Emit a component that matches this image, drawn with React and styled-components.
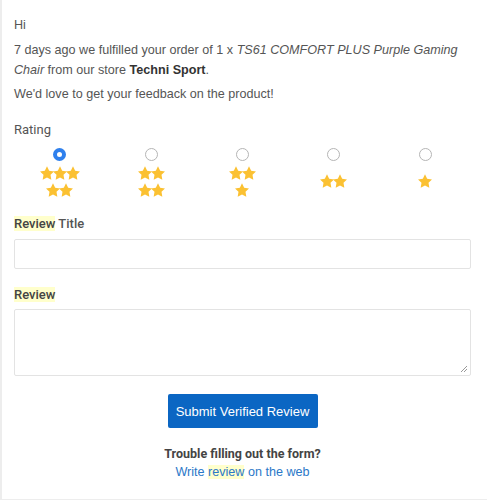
import React from 'react';
import styled, { createGlobalStyle } from 'styled-components';

const GlobalStyle = createGlobalStyle`
	body {
		margin: 0;
		background: #fff;
	}
`;

const Page = styled.div`
	box-sizing: border-box;
	width: 487px;
	height: 500px;
	padding: 15px 16px 0 12px;
	border-left: 2px solid #ededed;
	border-bottom: 1px solid #ededed;
	font-family: 'Liberation Sans', Arial, sans-serif;
	font-size: 12.6px;
	color: #555;
`;

const Text = styled.p`
	margin: 0 0 ${(p) => p.gap || 4}px;
	line-height: 20px;
`;

const Strong = styled.b`
	color: #333;
`;

const Label = styled.div`
	font-family: Roboto, 'Liberation Sans', sans-serif;
	font-size: 13px;
	font-weight: ${(p) => (p.bold ? 500 : 400)};
	line-height: 16px;
	color: #555;
	margin-top: ${(p) => p.top}px;
`;

const Mark = styled.mark`
	background: #ffffcc;
	color: ${(p) => p.color || '#444'};
`;

const RatingGrid = styled.div`
	display: grid;
	grid-template-columns: repeat(5, 1fr);
	justify-items: center;
	margin-top: 10px;
`;

const RatingOption = styled.label`
	display: flex;
	flex-direction: column;
	align-items: center;
	gap: 3px;
`;

const Radio = styled.span`
	box-sizing: border-box;
	width: 13px;
	height: 13px;
	border-radius: 50%;
	border: ${(p) => (p.checked ? '4px solid #2f80ed' : '1px solid #b5b5b5')};
	background: #fff;
`;

const StarBlock = styled.div`
	height: 34px;
	display: flex;
	flex-direction: column;
	justify-content: center;
	align-items: center;
`;

const StarRow = styled.div`
	display: flex;
	height: 17px;
	align-items: center;
`;

const StarIcon = styled.svg`
	flex: none;
	margin: 0 -0.5px;
`;

const Field = styled.div`
	box-sizing: border-box;
	margin-top: ${(p) => p.top}px;
	width: 100%;
	height: ${(p) => p.h}px;
	border: 1px solid #e3e3e3;
	border-radius: 2px;
	background: #fff;
	position: relative;
`;

const Grip = styled.svg`
	position: absolute;
	right: 2px;
	bottom: 2px;
`;

const Center = styled.div`
	display: flex;
	flex-direction: column;
	align-items: center;
`;

const Button = styled.button`
	margin-top: 18px;
	width: 150px;
	height: 34px;
	border: 0;
	border-radius: 2px;
	background: #0b66c3;
	color: #fff;
	font-family: 'Liberation Sans', Arial, sans-serif;
	font-size: 13px;
`;

const Trouble = styled.div`
	margin-top: 17px;
	font-family: Roboto, 'Liberation Sans', sans-serif;
	font-weight: 700;
	font-size: 12.5px;
	line-height: 18px;
	color: #444;
`;

const Link = styled.a`
	line-height: 18px;
	color: #2b78c8;
	text-decoration: none;
`;

const Star = () => (
	<StarIcon width='14' height='14' viewBox='0 0 24 24'>
		<path
			fill='#fbc132'
			d='M12 .6l3.7 7.5 8.3 1.2-6 5.8 1.4 8.3L12 19.5l-7.4 3.9 1.4-8.3-6-5.8 8.3-1.2z'
		/>
	</StarIcon>
);

const Stars = ({ n }) => (
	<StarRow>
		{Array.from({ length: n }, (_, i) => (
			<Star key={i} />
		))}
	</StarRow>
);

const ratings = [
	[3, 2],
	[2, 2],
	[2, 1],
	[2],
	[1],
];

const App = () => (
	<Page>
		<GlobalStyle />
		<Text gap={5}>Hi</Text>
		<Text>
			7 days ago we fulfilled your order of 1 x <i>TS61 COMFORT PLUS Purple Gaming Chair</i> from
			our store <Strong>Techni Sport</Strong>.
		</Text>
		<Text>We'd love to get your feedback on the product!</Text>

		<Label top={18}>Rating</Label>
		<RatingGrid>
			{ratings.map((rows, i) => (
				<RatingOption key={i}>
					<Radio checked={i === 0} />
					<StarBlock>
						{rows.map((n, j) => (
							<Stars key={j} n={n} />
						))}
					</StarBlock>
				</RatingOption>
			))}
		</RatingGrid>

		<Label bold top={18}>
			<Mark>Review</Mark> Title
		</Label>
		<Field top={7} h={30} />

		<Label bold top={18}>
			<Mark>Review</Mark>
		</Label>
		<Field top={6} h={67}>
			<Grip width='8' height='8' viewBox='0 0 8 8'>
				<path d='M7 1L1 7M7 4L4 7' stroke='#999' strokeWidth='1' />
			</Grip>
		</Field>

		<Center>
			<Button>Submit Verified Review</Button>
			<Trouble>Trouble filling out the form?</Trouble>
			<Link href='#'>
				Write <Mark color='#2b78c8'>review</Mark> on the web
			</Link>
		</Center>
	</Page>
);

export default App;
